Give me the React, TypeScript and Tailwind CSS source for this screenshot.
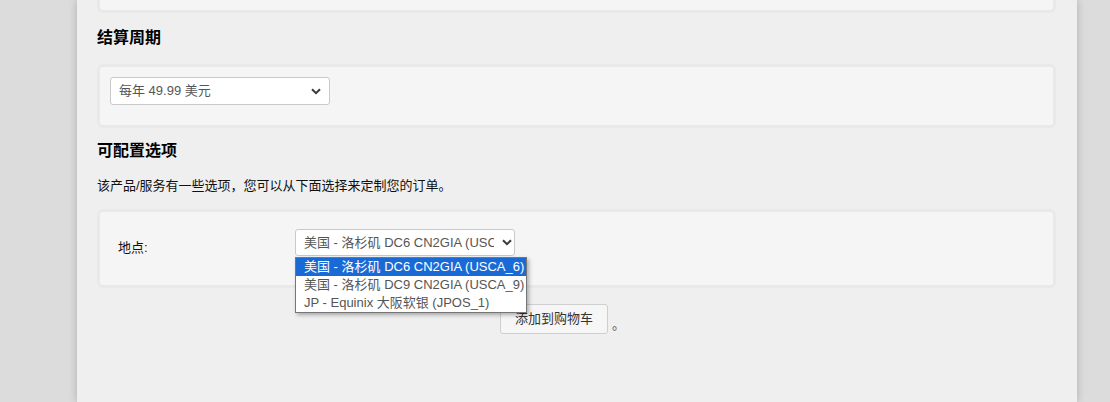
import React from "react";

const Chevron = () => (
  <svg width="10" height="7" viewBox="0 0 10 7" className="shrink-0">
    <path d="M1 1.2 L5 5.2 L9 1.2" fill="none" stroke="#3a3a3a" strokeWidth="2" />
  </svg>
);

export default function App() {
  const font = { fontFamily: '"Liberation Sans", "Noto Sans CJK SC", sans-serif' };
  return (
    <div className="w-[1110px] h-[402px] overflow-hidden bg-[#dcdcdc] text-[13px] text-[#111]" style={font}>
      <div className="ml-[77px] w-[1000px] h-[402px] bg-[#efefef] shadow-[0_0_8px_rgba(0,0,0,0.22)] px-[20px]">
        <div className="h-[13px] mr-[1px] bg-[#f5f5f5] border-[3px] border-t-0 border-[#e9e9e9] rounded-b-[6px]" />
        <h2 className="mt-[14px] mb-[15px] text-[16px] leading-[22px] font-bold text-black">结算周期</h2>
        <div className="mr-[1px] bg-[#f5f5f5] border-[3px] border-[#e9e9e9] rounded-[6px] pt-[10px] pb-[20px] px-[10px]">
          <div className="w-[220px] h-[28px] bg-white border border-[#c9c9c9] rounded-[3px] flex items-center pl-[8px] pr-[8px] text-[#555]">
            <span className="flex-1">每年 49.99 美元</span>
            <Chevron />
          </div>
        </div>
        <h2 className="mt-[12px] mb-[14px] text-[16px] leading-[22px] font-bold text-black">可配置选项</h2>
        <p className="leading-[20px] mb-[13px]">该产品/服务有一些选项，您可以从下面选择来定制您的订单。</p>
        <div className="mr-[1px] bg-[#f5f5f5] border-[3px] border-[#e9e9e9] rounded-[6px] pt-[17px] pb-[27px] pl-[18px] flex items-start">
          <div className="w-[177px] mt-[9px] leading-[20px]">地点:</div>
          <div className="relative">
            <div className="w-[220px] h-[27px] bg-white border border-[#c9c9c9] rounded-[3px] flex items-center pl-[8px] pr-[2px] text-[#555]">
              <span className="w-[190px] shrink-0 mr-[8px] overflow-hidden whitespace-nowrap">美国 - 洛杉矶 DC6 CN2GIA (USCA_6)</span>
              <Chevron />
            </div>
            <div className="absolute left-0 top-[28px] w-[232px] z-10 bg-white border border-[#767676] shadow-[2px_2px_4px_rgba(0,0,0,0.3)] text-[#555] leading-[18px]">
              <div className="bg-[#1a6ad6] text-white pl-[8px] whitespace-nowrap">美国 - 洛杉矶 DC6 CN2GIA (USCA_6)</div>
              <div className="pl-[8px] whitespace-nowrap">美国 - 洛杉矶 DC9 CN2GIA (USCA_9)</div>
              <div className="pl-[8px] whitespace-nowrap">JP - Equinix 大阪软银 (JPOS_1)</div>
            </div>
          </div>
        </div>
        <div className="mt-[16px] pl-[403px] flex items-end gap-[4px]">
          <button className="w-[108px] h-[30px] bg-[#f6f6f6] border border-[#cfcfcf] rounded-[3px] text-[#333] text-[13px]">添加到购物车</button>
          <span className="text-[#555]">。</span>
        </div>
      </div>
    </div>
  );
}
